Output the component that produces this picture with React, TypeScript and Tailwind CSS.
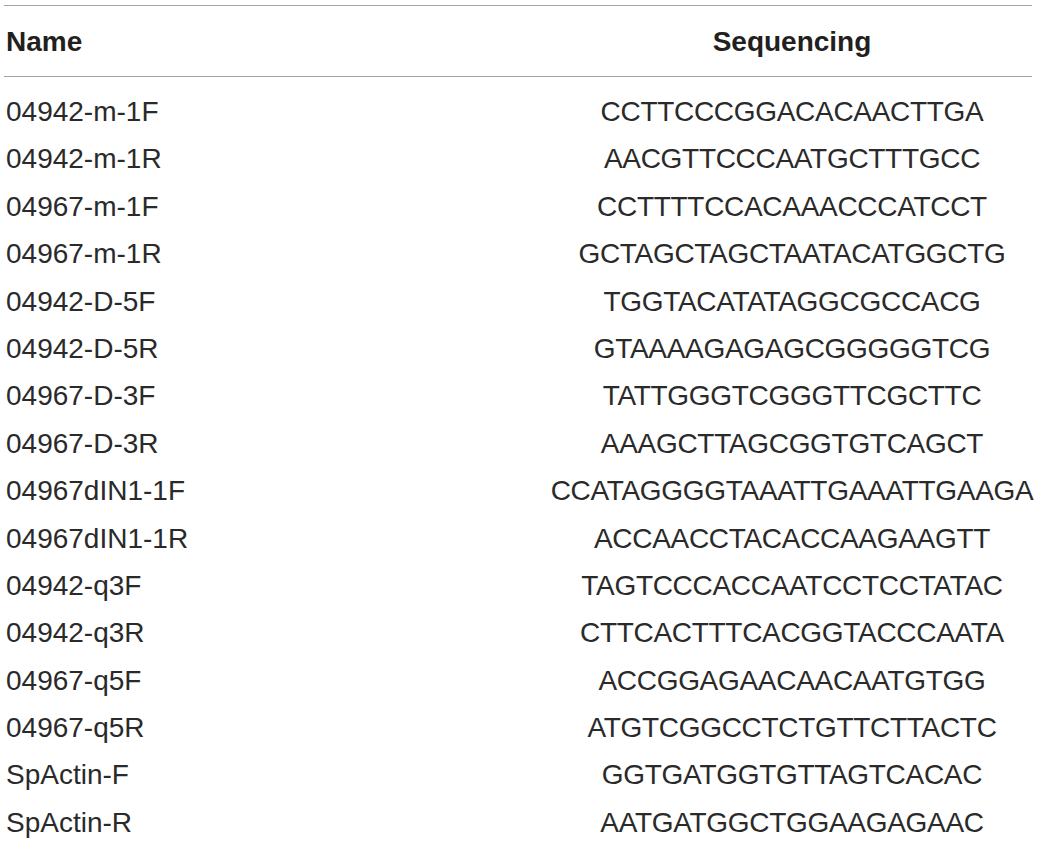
const rows: [string, string][] = [
  ["04942-m-1F", "CCTTCCCGGACACAACTTGA"],
  ["04942-m-1R", "AACGTTCCCAATGCTTTGCC"],
  ["04967-m-1F", "CCTTTTCCACAAACCCATCCT"],
  ["04967-m-1R", "GCTAGCTAGCTAATACATGGCTG"],
  ["04942-D-5F", "TGGTACATATAGGCGCCACG"],
  ["04942-D-5R", "GTAAAAGAGAGCGGGGGTCG"],
  ["04967-D-3F", "TATTGGGTCGGGTTCGCTTC"],
  ["04967-D-3R", "AAAGCTTAGCGGTGTCAGCT"],
  ["04967dIN1-1F", "CCATAGGGGTAAATTGAAATTGAAGA"],
  ["04967dIN1-1R", "ACCAACCTACACCAAGAAGTT"],
  ["04942-q3F", "TAGTCCCACCAATCCTCCTATAC"],
  ["04942-q3R", "CTTCACTTTCACGGTACCCAATA"],
  ["04967-q5F", "ACCGGAGAACAACAATGTGG"],
  ["04967-q5R", "ATGTCGGCCTCTGTTCTTACTC"],
  ["SpActin-F", "GGTGATGGTGTTAGTCACAC"],
  ["SpActin-R", "AATGATGGCTGGAAGAGAAC"],
]

export default function App() {
  return (
    <div className="w-[1039px] h-[843px] bg-white overflow-hidden pt-[5px] font-['Liberation_Sans',Arial,sans-serif] text-[28px] text-[#231f20]">
      <div className="ml-[4px] w-[1028px]">
        <div className="grid grid-cols-[548px_480px] h-[72px] items-center border-y border-[#a3a3a3] font-bold">
          <div className="pl-[2px] pt-[2px]">Name</div>
          <div className="flex justify-center pt-[2px]">Sequencing</div>
        </div>
        <div className="pt-[11px] text-[#2a2a2a]">
          {rows.map(([name, seq]) => (
            <div key={name} className="grid grid-cols-[548px_480px] h-[47.4px] items-center leading-[47.4px]">
              <div className="pl-[2px] whitespace-nowrap">{name}</div>
              <div className="flex justify-center whitespace-nowrap tracking-[-0.3px]">{seq}</div>
            </div>
          ))}
        </div>
      </div>
    </div>
  )
}
